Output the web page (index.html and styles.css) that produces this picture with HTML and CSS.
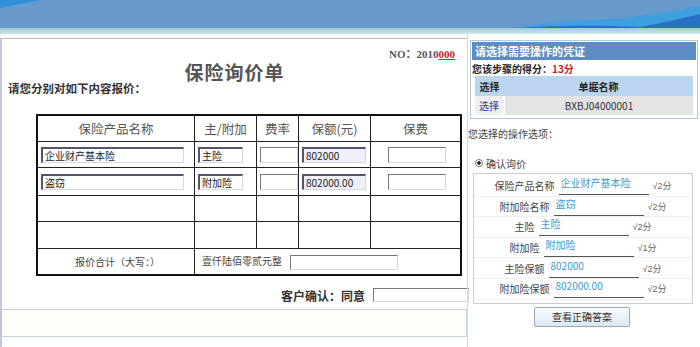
FILE: index.html
```html
<!DOCTYPE html>
<html lang="zh-CN">
<head>
    <meta charset="UTF-8">
    <title>保险询价单</title>
    <link rel="stylesheet" href="styles.css">
</head>
<body>
    <div class="banner">
        <svg class="banner-art" width="700" height="28" viewBox="0 0 700 28">
            <path d="M0 0 H40 Q20 4 0 8 Z" fill="#2f8fd8"/>
            <path d="M515 28 Q560 20 620 19 Q660 14 700 6 V28 Z" fill="#3d9fdc"/>
            <path d="M515 28 Q580 24 640 27 Q670 22 700 14 V28 Z" fill="#2a6fc6"/>
        </svg>
    </div>
    <div class="stripe"></div>

    <div class="page">
        <div class="quote">
            <div class="no">NO：2010<span class="red">000</span></div>
            <h1 class="title">保险询价单</h1>
            <p class="intro">请您分别对如下内容报价：</p>

            <table class="sheet">
                <tr class="head">
                    <th class="c1">保险产品名称</th>
                    <th class="c2">主/附加</th>
                    <th class="c3">费率</th>
                    <th class="c4">保额(元)</th>
                    <th class="c5">保费</th>
                </tr>
                <tr class="r1">
                    <td><input class="fld wide" value="企业财产基本险"></td>
                    <td><input class="fld mid" value="主险"></td>
                    <td><input class="fld plain small"></td>
                    <td><input class="fld amount" value="802000"></td>
                    <td class="center"><input class="fld plain fee"></td>
                </tr>
                <tr class="r2">
                    <td><input class="fld wide" value="盗窃"></td>
                    <td><input class="fld mid" value="附加险"></td>
                    <td><input class="fld plain small"></td>
                    <td><input class="fld amount" value="802000.00"></td>
                    <td class="center"><input class="fld plain fee"></td>
                </tr>
                <tr class="r3"><td></td><td></td><td></td><td></td><td></td></tr>
                <tr class="r4"><td></td><td></td><td></td><td></td><td></td></tr>
                <tr class="total">
                    <td class="center">报价合计（大写：）</td>
                    <td colspan="4"><span class="words">壹仟陆佰零贰元整</span><input class="fld plain sum"></td>
                </tr>
            </table>

            <div class="confirm">
                <span>客户确认：同意</span>
                <input class="fld plain agree">
            </div>
            <div class="notes"></div>
        </div>

        <div class="side">
            <div class="voucher">
                <div class="voucher-title">请选择需要操作的凭证</div>
                <div class="score">您该步骤的得分：<span class="red">13分</span></div>
                <table class="docs">
                    <tr class="docs-head"><th class="pick">选择</th><th>单据名称</th></tr>
                    <tr class="docs-row"><td class="pick"><a href="#">选择</a></td><td>BXBJ04000001</td></tr>
                </table>
            </div>

            <p class="ops">您选择的操作选项：</p>
            <label class="radio"><span class="dot"></span>确认询价</label>

            <div class="answers">
                <div class="ans"><span class="lbl">保险产品名称</span><span class="val">企业财产基本险</span><span class="pts">√2分</span></div>
                <div class="ans"><span class="lbl">附加险名称</span><span class="val">盗窃</span><span class="pts">√2分</span></div>
                <div class="ans"><span class="lbl">主险</span><span class="val">主险</span><span class="pts">√2分</span></div>
                <div class="ans"><span class="lbl">附加险</span><span class="val">附加险</span><span class="pts">√1分</span></div>
                <div class="ans"><span class="lbl">主险保额</span><span class="val">802000</span><span class="pts">√2分</span></div>
                <div class="ans"><span class="lbl">附加险保额</span><span class="val">802000.00</span><span class="pts">√2分</span></div>
            </div>

            <button class="show-btn">查看正确答案</button>
        </div>
    </div>
</body>
</html>
```

FILE: styles.css
```css
body {
    margin: 0;
    font-family: "Noto Sans CJK SC", "Liberation Sans", sans-serif;
    font-size: 12px;
    color: #333;
    background: #fff;
    width: 700px;
    height: 347px;
    overflow: hidden;
}

.banner {
    height: 28px;
    background: #6799cc;
    position: relative;
}

.banner-art {
    position: absolute;
    left: 0;
    top: 0;
}

.stripe {
    height: 6px;
    background: linear-gradient(#9fc8d4, #cfe8ea);
}

.page {
    display: flex;
    height: 313px;
}

.red {
    color: #d0202a;
}

/* left: quotation sheet */
.quote {
    width: 466px;
    margin-top: 4px;
    border-top: 1px solid #b8bcc4;
    border-left: 2px solid #c4c6dc;
    padding-top: 7px;
}

.no {
    text-align: right;
    padding-right: 12px;
    font-family: "Liberation Serif", "Noto Sans CJK SC", serif;
    font-weight: bold;
    font-size: 11px;
    line-height: 16px;
    color: #555;
}

.no .red {
    text-decoration: underline;
}

.title {
    margin: -1px 0 0;
    text-align: center;
    font-size: 19px;
    line-height: 22px;
    font-weight: bold;
    color: #555;
    letter-spacing: 1px;
}

.intro {
    margin: -2px 0 0 6px;
    font-weight: bold;
    font-size: 11.5px;
    line-height: 14px;
    color: #333;
}

.sheet {
    margin: 19px 0 0 34px;
    width: 426px;
    border-collapse: collapse;
    border: 2px solid #111;
}

.sheet th,
.sheet td {
    border: 1px solid #222;
    padding: 0 0 0 3px;
    font-weight: normal;
}

.sheet th {
    text-align: center;
    font-size: 12.5px;
    color: #555;
    padding: 0;
}

.head { height: 26px; }
.r1 { height: 26px; }
.r2 { height: 28px; }
.r3 { height: 26px; }
.r4 { height: 27px; }
.total { height: 27px; }

.c1 { width: 156px; }
.c2 { width: 61px; }
.c3 { width: 41px; }
.c4 { width: 71px; }

.center {
    text-align: center;
}

.fld {
    box-sizing: border-box;
    height: 16px;
    padding: 0 2px;
    font-family: inherit;
    font-size: 10px;
    color: #222;
    background: #fff;
    border-top: 2px solid #555570;
    border-left: 2px solid #555570;
    border-right: 1px solid #d8d8d8;
    border-bottom: 1px solid #d8d8d8;
    vertical-align: middle;
}

.fld.plain {
    border-top: 1px solid #777;
    border-left: 1px solid #777;
}

.wide { width: 143px; }
.mid { width: 45px; }
.small { width: 38px; }
.amount { width: 64px; background: #f0f0fa; }
.fee { width: 58px; }

.total td {
    font-size: 10px;
    color: #444;
}

.words {
    margin-left: 4px;
    margin-right: 8px;
}

.sum {
    width: 108px;
    height: 15px;
}

.confirm {
    display: flex;
    justify-content: flex-end;
    align-items: center;
    gap: 8px;
    height: 22px;
    margin-top: 8px;
    font-weight: bold;
    font-size: 12px;
    color: #333;
}

.agree {
    width: 96px;
    height: 14px;
    margin-right: -2px;
}

.notes {
    margin-top: 3px;
    height: 26px;
    border: 1px solid #c8d4e4;
    border-left: none;
    background: #fefdfa;
}

/* right: voucher and scores */
.side {
    flex: 1;
    border-left: 1px solid #c8dcec;
    padding-top: 4px;
    font-size: 10px;
}

.voucher {
    margin: 2px 2px 0 2px;
    border: 1px solid #b4c8dc;
    padding: 1px;
}

.voucher-title {
    height: 18px;
    line-height: 18px;
    padding-left: 3px;
    background: #5c8ec4;
    color: #fff;
    font-size: 11px;
    font-weight: bold;
}

.score {
    height: 16px;
    line-height: 18px;
    font-weight: bold;
    color: #222;
}

.docs {
    width: 218px;
    margin: 0 3px 2px;
    border-collapse: collapse;
}

.docs th {
    height: 18px;
    background: #bcd5ee;
    font-weight: bold;
    color: #222;
}

.docs td {
    height: 17px;
    background: #e4e4e4;
    text-align: center;
    color: #333;
}

.docs .pick {
    width: 26px;
}

.docs td.pick {
    background: #efefef;
    border-right: 2px solid #fff;
}

.docs a {
    color: #3040a0;
    text-decoration: none;
}

.ops {
    margin: 8px 0 0;
    line-height: 14px;
    color: #444;
}

.radio {
    display: flex;
    align-items: center;
    gap: 3px;
    height: 14px;
    margin: 15px 0 0 7px;
    color: #444;
}

.dot {
    width: 6px;
    height: 6px;
    border: 1px solid #777;
    border-radius: 50%;
    background: radial-gradient(#222 35%, #fff 45%);
}

.answers {
    margin: 3px 7px 0 5px;
    border: 1px solid #ccc;
    padding: 2px 0 3px;
}

.ans {
    display: flex;
    justify-content: center;
    align-items: center;
    box-sizing: border-box;
    height: 20.6px;
    border-bottom: 1px solid #f0f0f0;
    color: #444;
}

.lbl {
    margin-right: 4px;
}

.val {
    width: 90px;
    height: 17px;
    box-sizing: border-box;
    border-bottom: 1px solid #555;
    color: #3a9ad0;
    padding-left: 2px;
    line-height: 10px;
    margin-top: 2px;
}

.pts {
    margin-left: 4px;
    font-family: "Liberation Sans", "Noto Sans CJK SC", sans-serif;
    font-size: 9px;
    color: #666;
}

.show-btn {
    display: block;
    width: 96px;
    height: 20px;
    margin: 3px 0 0 66px;
    padding: 0;
    font-family: inherit;
    font-size: 10px;
    color: #333;
    background: linear-gradient(#fafcfe, #d8e8f4);
    border: 1px solid #98a8b8;
    border-radius: 2px;
}
```
